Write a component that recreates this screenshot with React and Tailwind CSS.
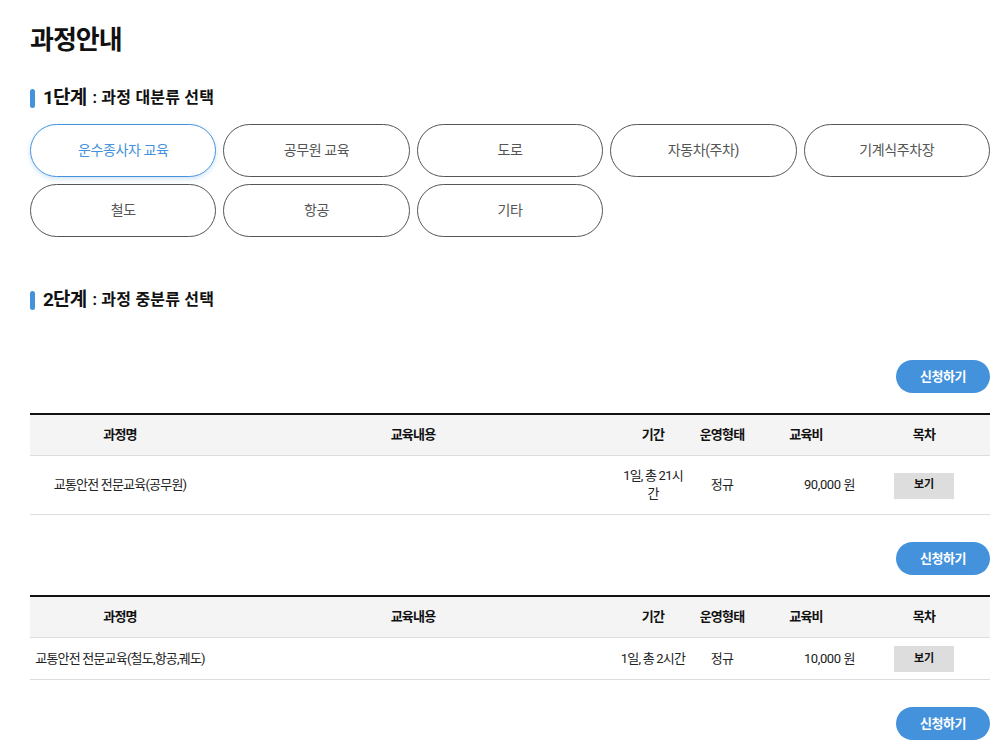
import React from "react";

const FONT = { fontFamily: 'Roboto, "Noto Sans CJK KR", "Noto Sans", sans-serif' };

const cats1 = ["운수종사자 교육", "공무원 교육", "도로", "자동차(주차)", "기계식주차장", "철도", "항공", "기타"];

function Heading({ step, label }) {
  return (
    <div className="flex items-center h-[28px]">
      <span className="w-[5px] h-[19px] rounded-full bg-[#4492dc]" />
      <span className="ml-[8px] text-[19px] font-bold text-[#111] leading-[28px] tracking-[-0.8px]">{step}</span>
      <span className="ml-[6px] text-[16px] font-bold text-[#111] leading-[28px] tracking-[0.2px]">: {label}</span>
    </div>
  );
}

function ApplyBtn({ mt }) {
  return (
    <div className={`flex justify-end ${mt}`}>
      <button className="w-[94px] h-[33px] rounded-full bg-[#4492dc] text-white text-[13px] font-bold tracking-[-0.5px]">신청하기</button>
    </div>
  );
}

function CourseTable({ name, period, fee }) {
  const th = "py-[11px] leading-[18px] text-[13px] font-bold text-[#111] text-center tracking-[-0.8px]";
  const td = "py-[11px] leading-[18px] text-[13px] text-[#222] text-center tracking-[-0.8px]";
  return (
    <table className="w-full table-fixed border-collapse mt-[20px] border-t-2 border-[#111]">
      <colgroup>
        <col className="w-[180px]" />
        <col className="w-[406px]" />
        <col className="w-[74px]" />
        <col className="w-[64px]" />
        <col className="w-[104px]" />
        <col className="w-[132px]" />
      </colgroup>
      <thead>
        <tr className="bg-[#f4f4f4] border-b border-[#dddddd]">
          <th className={th}>과정명</th>
          <th className={th}>교육내용</th>
          <th className={th}>기간</th>
          <th className={th}>운영형태</th>
          <th className={th}>교육비</th>
          <th className={th}>목차</th>
        </tr>
      </thead>
      <tbody>
        <tr className="border-b border-[#dddddd]">
          <td className={td}>{name}</td>
          <td className={td}></td>
          <td className={`${td} px-[3px]`}>{period}</td>
          <td className={td}>정규</td>
          <td className="py-[11px] leading-[18px] text-[13px] text-[#222] text-right pr-[3px] tracking-[-0.4px]">{fee}</td>
          <td className="py-[7px] text-center align-middle">
            <button className="w-[60px] h-[26px] bg-[#dddddd] text-[11px] font-bold text-[#111]">보기</button>
          </td>
        </tr>
      </tbody>
    </table>
  );
}

export default function App() {
  return (
    <div className="bg-white min-h-[747px]" style={FONT}>
      <div className="ml-[30px] w-[960px] pt-[22px] pb-[8px]">
        <h1 className="text-[26px] font-bold text-[#111] leading-[36px] tracking-[-1px]">과정안내</h1>

        <div className="mt-[26px]">
          <Heading step="1단계" label="과정 대분류 선택" />
        </div>

        <div className="mt-[12px] grid grid-cols-5 gap-x-[7px] gap-y-[7px]">
          {cats1.map((c, i) => (
            <button
              key={c}
              className={
                i === 0
                  ? "h-[53px] rounded-full border border-[#4492dc] text-[#4492dc] text-[14px] tracking-[-0.4px] shadow-[0_2px_5px_rgba(68,146,220,0.25)]"
                  : "h-[53px] rounded-full border border-[#555555] text-[#555555] text-[14px] tracking-[-0.4px]"
              }
            >
              {c}
            </button>
          ))}
        </div>

        <div className="mt-[49px]">
          <Heading step="2단계" label="과정 중분류 선택" />
        </div>

        <ApplyBtn mt="mt-[46px]" />
        <CourseTable name="교통안전 전문교육(공무원)" period="1일, 총 21시간" fee="90,000 원" />
        <ApplyBtn mt="mt-[27px]" />
        <CourseTable name="교통안전 전문교육(철도,항공,궤도)" period="1일, 총 2시간" fee="10,000 원" />
        <ApplyBtn mt="mt-[27px]" />
      </div>
    </div>
  );
}
